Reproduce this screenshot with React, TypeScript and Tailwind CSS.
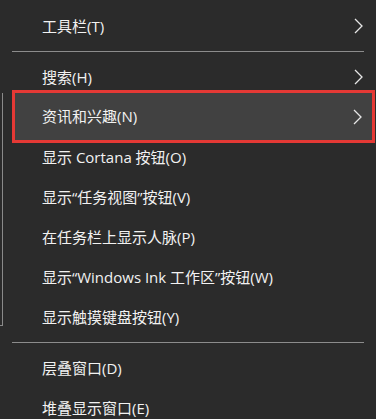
const font = { fontFamily: '"Open Sans", "Noto Sans CJK SC", sans-serif' };

function Chevron() {
  return (
    <svg width="9" height="16" viewBox="0 0 9 16" fill="none" className="shrink-0">
      <path d="M1 1L8 8L1 15" stroke="#e6e6e6" strokeWidth="1.3" />
    </svg>
  );
}

function Item({ label, sub }: { label: string; sub?: boolean }) {
  return (
    <div className="flex h-10 items-center pl-[42px] pr-[13px]">
      <span className="flex-1 text-[15px] text-[#f2f2f2]">{label}</span>
      {sub && <Chevron />}
    </div>
  );
}

function Separator() {
  return <div className="mx-3 my-[5px] h-px bg-[#8c8c8c] w-[352px]" />;
}

export default function App() {
  return (
    <div className="relative h-[419px] w-[376px] overflow-hidden bg-[#2b2b2b]" style={font}>
      {/* edge of the window behind the menu */}
      <div className="absolute left-0 top-[93px] h-[233px] w-[3px] border-r border-b border-[#8a8a8a]" />

      <div className="flex flex-col pt-[6px]">
        <Item label="工具栏(T)" sub />
        <Separator />
        <Item label="搜索(H)" sub />
        {/* hovered row, outlined in red */}
        <div className="ml-3 mr-[1px] -mt-[7px] -mb-[6px] flex h-[53px] items-center border-[3px] border-[#e53935] bg-[#414141] pl-[27px] pr-[10px]">
          <span className="flex-1 text-[15px] text-[#f2f2f2]">资讯和兴趣(N)</span>
          <Chevron />
        </div>
        <Item label="显示 Cortana 按钮(O)" />
        <Item label="显示“任务视图”按钮(V)" />
        <Item label="在任务栏上显示人脉(P)" />
        <Item label="显示“Windows Ink 工作区”按钮(W)" />
        <Item label="显示触摸键盘按钮(Y)" />
        <Separator />
        <Item label="层叠窗口(D)" />
        <Item label="堆叠显示窗口(E)" />
      </div>
    </div>
  );
}
